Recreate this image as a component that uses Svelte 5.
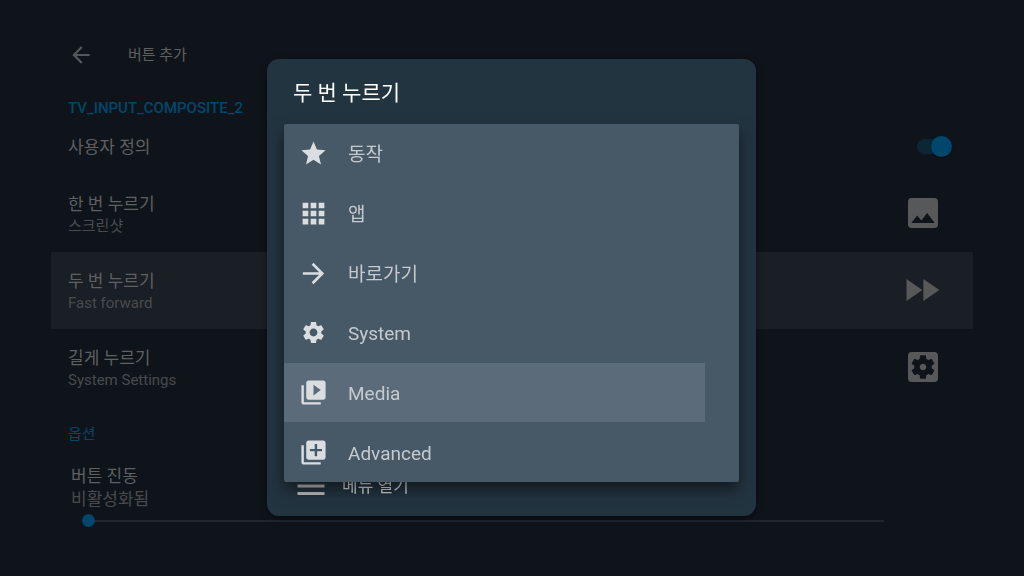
<script lang="ts">
	type IconName =
		| 'star'
		| 'apps'
		| 'forward'
		| 'cog'
		| 'media'
		| 'add'
		| 'image'
		| 'fast'
		| 'settings'
		| 'menu'
		| 'back';

	const icons: Record<IconName, string> = {
		star: 'M12 17.27L18.18 21l-1.64-7.03L22 9.24l-7.19-.61L12 2 9.19 8.63 2 9.24l5.46 4.73L5.82 21z',
		apps: 'M3 3h4.7v4.7H3zM9.65 3h4.7v4.7h-4.7zM16.3 3H21v4.7h-4.7zM3 9.65h4.7v4.7H3zM9.65 9.65h4.7v4.7h-4.7zM16.3 9.65H21v4.7h-4.7zM3 16.3h4.7V21H3zM9.65 16.3h4.7V21h-4.7zM16.3 16.3H21V21h-4.7z',
		forward: 'M12 3.2l-1.5 1.5 6.2 6.2H3.2v2.2h13.5l-6.2 6.2 1.5 1.5 8.8-8.8z',
		cog: 'M19.14 12.94c.04-.3.06-.61.06-.94 0-.32-.02-.64-.07-.94l2.03-1.58c.18-.14.23-.41.12-.61l-1.92-3.32c-.12-.22-.37-.29-.59-.22l-2.39.96c-.5-.38-1.03-.7-1.62-.94l-.36-2.54c-.04-.24-.24-.41-.48-.41h-3.84c-.24 0-.43.17-.47.41l-.36 2.54c-.59.24-1.13.57-1.62.94l-2.39-.96c-.22-.08-.47 0-.59.22L2.74 8.87c-.12.21-.08.47.12.61l2.03 1.58c-.05.3-.09.63-.09.94s.02.64.07.94l-2.03 1.58c-.18.14-.23.41-.12.61l1.92 3.32c.12.22.37.29.59.22l2.39-.96c.5.38 1.03.7 1.62.94l.36 2.54c.05.24.24.41.48.41h3.84c.24 0 .44-.17.47-.41l.36-2.54c.59-.24 1.13-.56 1.62-.94l2.39.96c.22.08.47 0 .59-.22l1.92-3.32c.12-.22.07-.47-.12-.61l-2.01-1.58zM12 15.6c-1.98 0-3.6-1.62-3.6-3.6s1.62-3.6 3.6-3.6 3.6 1.62 3.6 3.6-1.62 3.6-3.6 3.6z',
		media: 'M4 6H2v14c0 1.1.9 2 2 2h14v-2H4V6zm16-4H8c-1.1 0-2 .9-2 2v12c0 1.1.9 2 2 2h12c1.1 0 2-.9 2-2V4c0-1.1-.9-2-2-2zm-8 12.5v-9l6 4.5-6 4.5z',
		add: 'M4 6H2v14c0 1.1.9 2 2 2h14v-2H4V6zm16-4H8c-1.1 0-2 .9-2 2v12c0 1.1.9 2 2 2h12c1.1 0 2-.9 2-2V4c0-1.1-.9-2-2-2zm-1 9h-4v4h-2v-4H9V9h4V5h2v4h4v2z',
		image: 'M21 19V5c0-1.1-.9-2-2-2H5c-1.1 0-2 .9-2 2v14c0 1.1.9 2 2 2h14c1.1 0 2-.9 2-2zM8.5 13.5l2.5 3.01L14.5 12l4.5 6H5l3.5-4.5z',
		fast: 'M2.1 5.4v13.2l9.5-6.6zM12.2 5.4v13.2l9.6-6.6z',
		settings: 'M12 10c-1.1 0-2 .9-2 2s.9 2 2 2 2-.9 2-2-.9-2-2-2zm7-7H5c-1.11 0-2 .9-2 2v14c0 1.1.89 2 2 2h14c1.11 0 2-.9 2-2V5c0-1.1-.89-2-2-2zm-1.75 9c0 .23-.02.46-.05.68l1.48 1.16c.13.11.17.3.08.45l-1.4 2.42c-.09.15-.27.21-.43.15l-1.74-.7c-.36.28-.76.51-1.18.69l-.26 1.85c-.03.17-.18.3-.35.3h-2.8c-.17 0-.32-.13-.35-.29l-.26-1.85c-.43-.18-.82-.41-1.18-.69l-1.74.7c-.16.06-.34 0-.43-.15l-1.4-2.42c-.09-.15-.05-.34.08-.45l1.48-1.16c-.03-.23-.05-.46-.05-.69 0-.23.02-.46.05-.68l-1.48-1.16c-.13-.11-.17-.3-.08-.45l1.4-2.42c.09-.15.27-.21.43-.15l1.74.7c.36-.28.76-.51 1.18-.69l.26-1.85c.03-.17.18-.3.35-.3h2.8c.17 0 .32.13.35.29l.26 1.85c.43.18.82.41 1.18.69l1.74-.7c.16-.06.34 0 .43.15l1.4 2.42c.09.15.05.34-.08.45l-1.48 1.16c.03.23.05.46.05.69z',
		menu: 'M3 18h18v-2H3v2zm0-5h18v-2H3v2zm0-7v2h18V6H3z',
		back: 'M20 11H7.83l5.59-5.59L12 4l-8 8 8 8 1.41-1.41L7.83 13H20v-2z'
	};

	const presses: { title: string; summary: string; icon: IconName }[] = [
		{ title: '한 번 누르기', summary: '스크린샷', icon: 'image' },
		{ title: '두 번 누르기', summary: 'Fast forward', icon: 'fast' },
		{ title: '길게 누르기', summary: 'System Settings', icon: 'settings' }
	];

	const categories: { label: string; icon: IconName }[] = [
		{ label: '동작', icon: 'star' },
		{ label: '앱', icon: 'apps' },
		{ label: '바로가기', icon: 'forward' },
		{ label: 'System', icon: 'cog' },
		{ label: 'Media', icon: 'media' },
		{ label: 'Advanced', icon: 'add' }
	];

	let custom = $state(true);
	let vibration = $state(0);
	let current = $state(1);
	let selected = $state('Media');
</script>

{#snippet icon(name: IconName)}
	<svg class="icon icon-{name}" viewBox="0 0 24 24" fill="currentColor" aria-hidden="true">
		<path d={icons[name]} />
	</svg>
{/snippet}

<main class="page">
	<header class="toolbar">
		<button class="back" aria-label="뒤로">{@render icon('back')}</button>
		<h1 class="toolbar-title">버튼 추가</h1>
	</header>

	<section>
		<h2 class="section-title key-name">TV_INPUT_COMPOSITE_2</h2>
		<label class="row switch-row">
			<span class="title">사용자 정의</span>
			<input class="switch" type="checkbox" role="switch" bind:checked={custom} />
		</label>
		{#each presses as press, i}
			<button class="row press-row" class:active={current === i} onclick={() => (current = i)}>
				<span class="row-text">
					<span class="title">{press.title}</span>
					<span class="summary">{press.summary}</span>
				</span>
				{@render icon(press.icon)}
			</button>
		{/each}
	</section>

	<section>
		<h2 class="section-title options">옵션</h2>
		<div class="slider-pref">
			<label class="title" for="vibration">버튼 진동</label>
			<span class="slider-value">비활성화됨</span>
			<input id="vibration" class="slider" type="range" min="0" max="100" bind:value={vibration} />
		</div>
	</section>
</main>

<div class="overlay">
	<div class="dialog" role="dialog" aria-modal="true" aria-labelledby="dialog-title">
		<h2 id="dialog-title" class="dialog-title">두 번 누르기</h2>

		<!-- Category popup, open over the action list -->
		<div class="popup" role="listbox" aria-label="두 번 누르기">
			{#each categories as category}
				<button
					class="option"
					class:selected={selected === category.label}
					role="option"
					aria-selected={selected === category.label}
					onclick={() => (selected = category.label)}
				>
					{@render icon(category.icon)}
					<span class="option-label">{category.label}</span>
				</button>
			{/each}
		</div>

		<button class="action">
			{@render icon('menu')}
			<span>메뉴 열기</span>
		</button>
	</div>
</div>

<style>
	:global(body) {
		background: #0f141b;
	}

	.page,
	.overlay {
		font-family: Roboto, 'Noto Sans CJK KR', sans-serif;
	}

	h1,
	h2 {
		margin: 0;
		font-weight: 400;
	}

	button {
		margin: 0;
		padding: 0;
		border: none;
		background: none;
		color: inherit;
		font: inherit;
		text-align: left;
		cursor: pointer;
	}

	.icon {
		display: block;
		flex-shrink: 0;
	}

	.page {
		padding: 35px 51px 0;
		color: #5e6061;
	}

	.toolbar {
		display: flex;
		align-items: center;
		gap: 34px;
		height: 40px;
		padding-left: 17px;
		margin-bottom: 23px;
	}

	.back {
		color: #55585a;
	}

	.icon-back {
		width: 26px;
		height: 26px;
	}

	.toolbar-title {
		font-size: 15px;
		line-height: 20px;
	}

	.section-title {
		padding-left: 17px;
		font-size: 15px;
		line-height: 20px;
		color: #00476b;
	}

	.key-name {
		font-weight: 500;
	}

	.options {
		padding-top: 18px;
		padding-bottom: 16px;
	}

	.row {
		display: flex;
		align-items: center;
		justify-content: space-between;
		box-sizing: border-box;
		width: 100%;
		padding-left: 17px;
	}

	.switch-row {
		height: 57px;
		padding-right: 21px;
	}

	.press-row {
		height: 77px;
		padding-right: 30px;
		padding-bottom: 2px;
	}

	.press-row.active {
		background: #1a1e25;
	}

	.press-row .icon {
		width: 40px;
		height: 40px;
		color: #575859;
	}

	.row-text {
		display: flex;
		flex-direction: column;
		padding-top: 4px;
	}

	.title {
		font-size: 17px;
		line-height: 22px;
	}

	.summary {
		font-size: 15px;
		line-height: 22px;
		color: #484b4d;
	}

	.switch {
		appearance: none;
		display: flex;
		align-items: center;
		width: 35px;
		height: 15px;
		margin: 0;
		border-radius: 8px;
		background: linear-gradient(#0b2736, #0b2736) left / 28px 15px no-repeat;
	}

	.switch::before {
		content: '';
		width: 21px;
		height: 21px;
		flex-shrink: 0;
		border-radius: 50%;
		background: #5a5b5c;
		box-shadow: 0 1px 2px rgba(0, 0, 0, 0.4);
	}

	.switch:checked::before {
		margin-left: auto;
		background: #00476b;
	}

	.slider-pref {
		display: flex;
		flex-direction: column;
		padding: 5px 89px 0 20px;
	}

	.slider-value {
		font-size: 17px;
		line-height: 24px;
		color: #484b4d;
	}

	.slider {
		appearance: none;
		height: 19px;
		margin: 0 0 0 11px;
		background: none;
	}

	.slider::-webkit-slider-runnable-track {
		height: 2px;
		background: #22262a;
	}

	.slider::-webkit-slider-thumb {
		appearance: none;
		width: 13px;
		height: 13px;
		margin-top: -6px;
		border-radius: 50%;
		background: #00476b;
	}

	.overlay {
		position: fixed;
		inset: 0;
		display: flex;
		align-items: center;
		justify-content: center;
		padding: 0 1px 1px 0;
	}

	.dialog {
		display: flex;
		flex-direction: column;
		width: 489px;
		max-width: 100%;
		border-radius: 12px;
		background: #233441;
		box-shadow: 0 2px 6px rgba(0, 0, 0, 0.5);
		overflow: hidden;
	}

	.dialog-title {
		padding: 20px 26px 17px;
		font-size: 21px;
		line-height: 28px;
		color: #fff;
	}

	.popup {
		display: flex;
		flex-direction: column;
		height: 358px;
		margin: 0 17px;
		border-radius: 2px;
		background: #475866;
		box-shadow: 0 8px 16px rgba(0, 0, 0, 0.5);
		z-index: 1;
	}

	.option {
		display: flex;
		flex: 1;
		align-items: center;
		gap: 20px;
		margin-right: 34px;
		padding-left: 15px;
		font-size: 19px;
		line-height: 24px;
		color: #c5cacf;
	}

	.option-label {
		padding-top: 3px;
	}

	.option.selected {
		background: #5c6b79;
	}

	.option .icon {
		width: 29px;
		height: 29px;
		color: #dadee1;
	}

	.option .icon-cog path {
		transform: scale(0.9);
		transform-origin: 12px 12px;
	}

	.action {
		display: flex;
		align-items: center;
		gap: 13px;
		height: 60px;
		margin-top: -26px;
		padding-left: 26px;
		font-size: 17px;
		line-height: 22px;
		color: #d3d6d9;
	}

	.action .icon {
		width: 36px;
		height: 36px;
		color: #bfbfbf;
	}
</style>
